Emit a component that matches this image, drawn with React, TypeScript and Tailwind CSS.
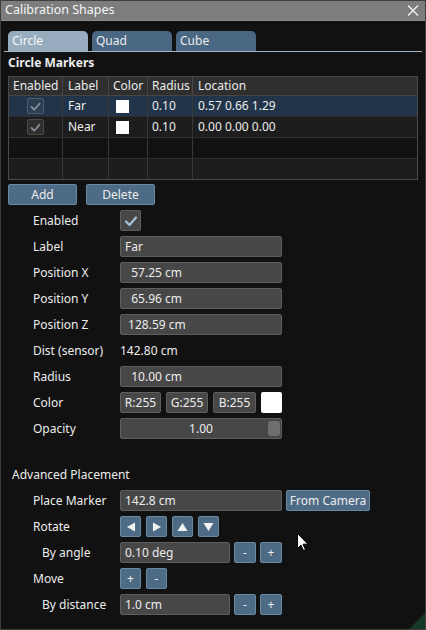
import React from "react";

function Check({ className = "" }: { className?: string }) {
  return (
    <svg viewBox="0 0 16 16" className={className} fill="none">
      <path d="M3 8.5 L6.5 12 L13 4.5" stroke="currentColor" strokeWidth="2.2" strokeLinecap="round" strokeLinejoin="round" />
    </svg>
  );
}

function Input({ children, className = "" }: { children: React.ReactNode; className?: string }) {
  return (
    <div className={"h-[21px] bg-[#474747] border border-[#5e5e5e] rounded-[2px] flex items-center px-[4px] whitespace-pre " + className}>
      {children}
    </div>
  );
}

function Btn({ children, className = "" }: { children: React.ReactNode; className?: string }) {
  return (
    <div className={"h-[21px] bg-[#4e6b85] border border-[#6a89a4] rounded-[2px] flex items-center justify-center " + className}>
      {children}
    </div>
  );
}

function Row({ label, indent = false, children }: { label: string; indent?: boolean; children?: React.ReactNode }) {
  return (
    <div className="flex items-center h-[21px]">
      <div className={"w-[112px] shrink-0 " + (indent ? "pl-[34px]" : "pl-[25px]")}>{label}</div>
      {children}
    </div>
  );
}

function Tri({ dir }: { dir: "l" | "r" | "u" | "d" }) {
  const pts = {
    l: "3,6 11,1.5 11,10.5",
    r: "3,1.5 11,6 3,10.5",
    u: "1.5,10 6.5,2 11.5,10",
    d: "1.5,2 11.5,2 6.5,10",
  }[dir];
  return (
    <svg viewBox="0 0 13 12" className="w-[13px] h-[12px]">
      <polygon points={pts} fill="#f2f2f2" />
    </svg>
  );
}

export default function App() {
  const rows = [
    { sel: true, label: "Far", loc: "0.57 0.66 1.29", bg: "bg-[#213449]" },
    { sel: false, label: "Near", loc: "0.00 0.00 0.00", bg: "bg-[#1d1d1d]" },
  ];
  return (
    <div className="relative w-[426px] h-[630px] bg-[#111111] border border-[#3e3e3e] text-[#ececec] text-[12px] leading-none font-['Noto_Sans','Open_Sans',sans-serif] overflow-hidden">
      {/* title bar */}
      <div className="h-[20px] bg-[#7d7d7d] border-b border-[#8c8c8c] flex items-center justify-between pl-[4px] pr-[6px] text-[#f4f4f4] text-[12.5px]">
        <span>Calibration Shapes</span>
        <svg viewBox="0 0 12 11" className="w-[12px] h-[11px]">
          <path d="M1 0.5 L11 10.5 M11 0.5 L1 10.5" stroke="#f4f4f4" strokeWidth="1.3" />
        </svg>
      </div>

      <div className="px-[7px]">
        {/* tabs */}
        <div className="mt-[10px] flex gap-[4px] h-[20px]">
          <div className="w-[80px] rounded-t-[5px] bg-[#97adbf] flex items-center px-[4px] text-[#f7f7f7]">Circle</div>
          <div className="w-[80px] rounded-t-[5px] bg-[#4a6883] flex items-center px-[4px]">Quad</div>
          <div className="w-[80px] rounded-t-[5px] bg-[#4a6883] flex items-center px-[4px]">Cube</div>
        </div>
        <div className="-mx-[4px] h-[1px] bg-[#a3b6c6]" />

        <div className="h-[22px] flex items-center font-bold">Circle Markers</div>

        {/* table */}
        <div className="mt-[2px] border border-[#4a4a4a]">
          <div className="grid grid-cols-[54px_46px_39px_45px_1fr] h-[19px] bg-[#2f2f2f] border-b border-[#454545]">
            <div className="flex items-center px-[4px] border-r border-[#474747]">Enabled</div>
            <div className="flex items-center px-[5px] border-r border-[#474747]">Label</div>
            <div className="flex items-center px-[4px] border-r border-[#474747]">Color</div>
            <div className="flex items-center px-[4px] border-r border-[#474747]">Radius</div>
            <div className="flex items-center px-[5px]">Location</div>
          </div>
          {rows.map((r, i) => (
            <div key={i} className={"grid grid-cols-[54px_46px_39px_45px_1fr] h-[21px] border-b border-[#2e2e2e] " + r.bg}>
              <div className="flex items-center justify-center border-r border-[#383838]">
                <div className={"w-[17px] h-[16px] rounded-[2px] border flex items-center justify-center " + (r.sel ? "bg-[#2c3d50] border-[#4d5d6e] text-[#7f909f]" : "bg-[#2e2e2e] border-[#494949] text-[#848d96]")}>
                  <Check className="w-[13px] h-[13px]" />
                </div>
              </div>
              <div className="flex items-center px-[5px] border-r border-[#383838]">{r.label}</div>
              <div className="flex items-center px-[7px] border-r border-[#383838]">
                <div className="w-[13px] h-[13px] bg-white" />
              </div>
              <div className="flex items-center px-[4px] border-r border-[#383838]">0.10</div>
              <div className="flex items-center px-[5px]">{r.loc}</div>
            </div>
          ))}
          <div className="grid grid-cols-[54px_46px_39px_45px_1fr] h-[21px] border-b border-[#2e2e2e] bg-[#121212]">
            <div className="border-r border-[#383838]" />
            <div className="border-r border-[#383838]" />
            <div className="border-r border-[#383838]" />
            <div className="border-r border-[#383838]" />
            <div />
          </div>
          <div className="grid grid-cols-[54px_46px_39px_45px_1fr] h-[20px] bg-[#1c1c1c]">
            <div className="border-r border-[#383838]" />
            <div className="border-r border-[#383838]" />
            <div className="border-r border-[#383838]" />
            <div className="border-r border-[#383838]" />
            <div />
          </div>
        </div>

        {/* add / delete */}
        <div className="mt-[4px] flex gap-[9px]">
          <Btn className="w-[69px]">Add</Btn>
          <Btn className="w-[69px]">Delete</Btn>
        </div>

        {/* form */}
        <div className="mt-[5px] flex flex-col gap-[5px]">
          <Row label="Enabled">
            <div className="w-[21px] h-[21px] rounded-[2px] bg-[#474747] border border-[#5e5e5e] flex items-center justify-center text-[#a9c1d5]">
              <Check className="w-[16px] h-[16px]" />
            </div>
          </Row>
          <Row label="Label">
            <Input className="w-[162px]">Far</Input>
          </Row>
          <Row label="Position X">
            <Input className="w-[162px]">{"  57.25 cm"}</Input>
          </Row>
          <Row label="Position Y">
            <Input className="w-[162px]">{"  65.96 cm"}</Input>
          </Row>
          <Row label="Position Z">
            <Input className="w-[162px]">{" 128.59 cm"}</Input>
          </Row>
          <Row label="Dist (sensor)">
            <span>142.80 cm</span>
          </Row>
          <Row label="Radius">
            <Input className="w-[162px]">{"  10.00 cm"}</Input>
          </Row>
          <Row label="Color">
            <div className="flex gap-[5px]">
              <Input className="w-[41px] justify-center px-0">R:255</Input>
              <Input className="w-[42px] justify-center px-0">G:255</Input>
              <Input className="w-[43px] justify-center px-0">B:255</Input>
              <div className="w-[21px] h-[21px] rounded-[2px] bg-white" />
            </div>
          </Row>
          <Row label="Opacity">
            <div className="relative w-[162px] h-[21px] bg-[#474747] border border-[#5e5e5e] rounded-[2px] flex items-center justify-center">
              <span>1.00</span>
              <div className="absolute right-[1px] top-[2px] w-[12px] h-[15px] rounded-[3px] bg-[#6e6e6e]" />
            </div>
          </Row>
        </div>

        <div className="mt-[25px] h-[21px] flex items-center pl-[4px]">Advanced Placement</div>

        <div className="mt-[5px] flex flex-col gap-[5px]">
          <Row label="Place Marker">
            <Input className="w-[162px]">142.8 cm</Input>
            <Btn className="ml-[4px] w-[84px]">From Camera</Btn>
          </Row>
          <Row label="Rotate">
            <div className="flex gap-[5px]">
              <Btn className="w-[21px]"><Tri dir="l" /></Btn>
              <Btn className="w-[21px]"><Tri dir="r" /></Btn>
              <Btn className="w-[21px]"><Tri dir="u" /></Btn>
              <Btn className="w-[21px]"><Tri dir="d" /></Btn>
            </div>
          </Row>
          <Row label="By angle" indent>
            <Input className="w-[110px]">0.10 deg</Input>
            <Btn className="ml-[4px] w-[22px]">-</Btn>
            <Btn className="ml-[4px] w-[22px]">+</Btn>
          </Row>
          <Row label="Move">
            <div className="flex gap-[5px]">
              <Btn className="w-[21px]">+</Btn>
              <Btn className="w-[21px]">-</Btn>
            </div>
          </Row>
          <Row label="By distance" indent>
            <Input className="w-[110px]">1.0 cm</Input>
            <Btn className="ml-[4px] w-[22px]">-</Btn>
            <Btn className="ml-[4px] w-[22px]">+</Btn>
          </Row>
        </div>
      </div>

      {/* resize grip */}
      <svg viewBox="0 0 16 16" className="absolute right-0 bottom-0 w-[16px] h-[16px]">
        <polygon points="16,0 16,16 0,16" fill="#163626" />
      </svg>

      {/* mouse cursor */}
      <svg viewBox="0 0 12 19" className="absolute left-[296px] top-[532px] w-[12px] h-[19px]">
        <path d="M0.5 0.5 L0.5 15.5 L4 12 L6.5 17.5 L8.5 16.5 L6 11.2 L11 11.2 Z" fill="#ffffff" stroke="#000000" strokeWidth="1" strokeLinejoin="round" />
      </svg>
    </div>
  );
}
